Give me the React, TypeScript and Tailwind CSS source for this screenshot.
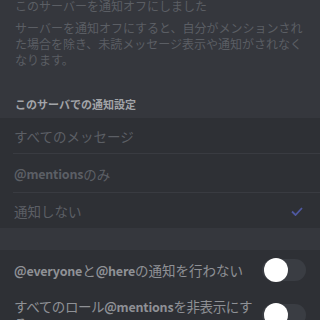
import React from "react";

const font = { fontFamily: '"Noto Sans CJK JP", "Noto Sans", sans-serif' };

function Toggle() {
  return (
    <div className="relative w-[44px] h-[22px] rounded-full bg-[#3a3d43] shrink-0">
      <div className="absolute left-[2px] top-[-1px] w-[24px] h-[24px] rounded-full bg-white" />
    </div>
  );
}

function Latin({ children }: { children: React.ReactNode }) {
  return <span className="font-semibold text-[12.5px] tracking-[-0.2px]">{children}</span>;
}

export default function App() {
  return (
    <div
      className="w-[320px] h-[320px] overflow-hidden bg-[#35373d] flex flex-col"
      style={font}
    >
      <div className="px-[15px] text-[12px] leading-[16px] text-[#5b5e64]">
        <div className="-mt-[2px]">このサーバーを通知オフにしました</div>
        <div className="mt-[6px]">
          サーバーを通知オフにすると、自分がメンションされた場合を除き、未読メッセージ表示や通知がされなくなります。
        </div>
      </div>
      <div className="px-[15px] pt-[29px] pb-[7px] text-[11px] leading-[14px] font-semibold text-[#a2a4a8]">
        このサーバでの通知設定
      </div>
      <div className="bg-[#2e3035] text-[13.5px] text-[#5c5f65]">
        <div className="h-[35px] px-[14px] flex items-center pt-[2px]">すべてのメッセージ</div>
        <div className="ml-[13px] h-px bg-[#393b41]" />
        <div className="h-[38px] px-[14px] flex items-center pt-[2px]">
          <Latin>@mentions</Latin>のみ
        </div>
        <div className="ml-[13px] h-px bg-[#393b41]" />
        <div className="h-[35px] pl-[14px] pr-[16px] flex items-center justify-between pt-[2px]">
          <span>通知しない</span>
          <svg width="12" height="9" viewBox="0 0 12 9" className="mr-[1px]">
            <polyline points="1,4.5 4.5,8 11,1" fill="none" stroke="#4e58a0" strokeWidth="1.8" />
          </svg>
        </div>
      </div>
      <div className="h-[22px] shrink-0" />
      <div className="bg-[#2e3035] flex-1 text-[13.5px] text-[#8f9196]">
        <div className="h-[40px] pl-[14px] pr-[14px] flex items-center gap-[10px]">
          <div className="flex-1 whitespace-nowrap">
            <Latin>@everyone</Latin>と<Latin>@here</Latin>の通知を行わない
          </div>
          <Toggle />
        </div>
        <div className="pl-[14px] pr-[14px] pt-[8px] flex items-center gap-[8px]">
          <div className="flex-1 min-w-0 leading-[17px] whitespace-nowrap tracking-[-0.4px]">
            すべてのロール<Latin>@mentions</Latin>を非表示にす
            <br />る
          </div>
          <Toggle />
        </div>
      </div>
    </div>
  );
}
